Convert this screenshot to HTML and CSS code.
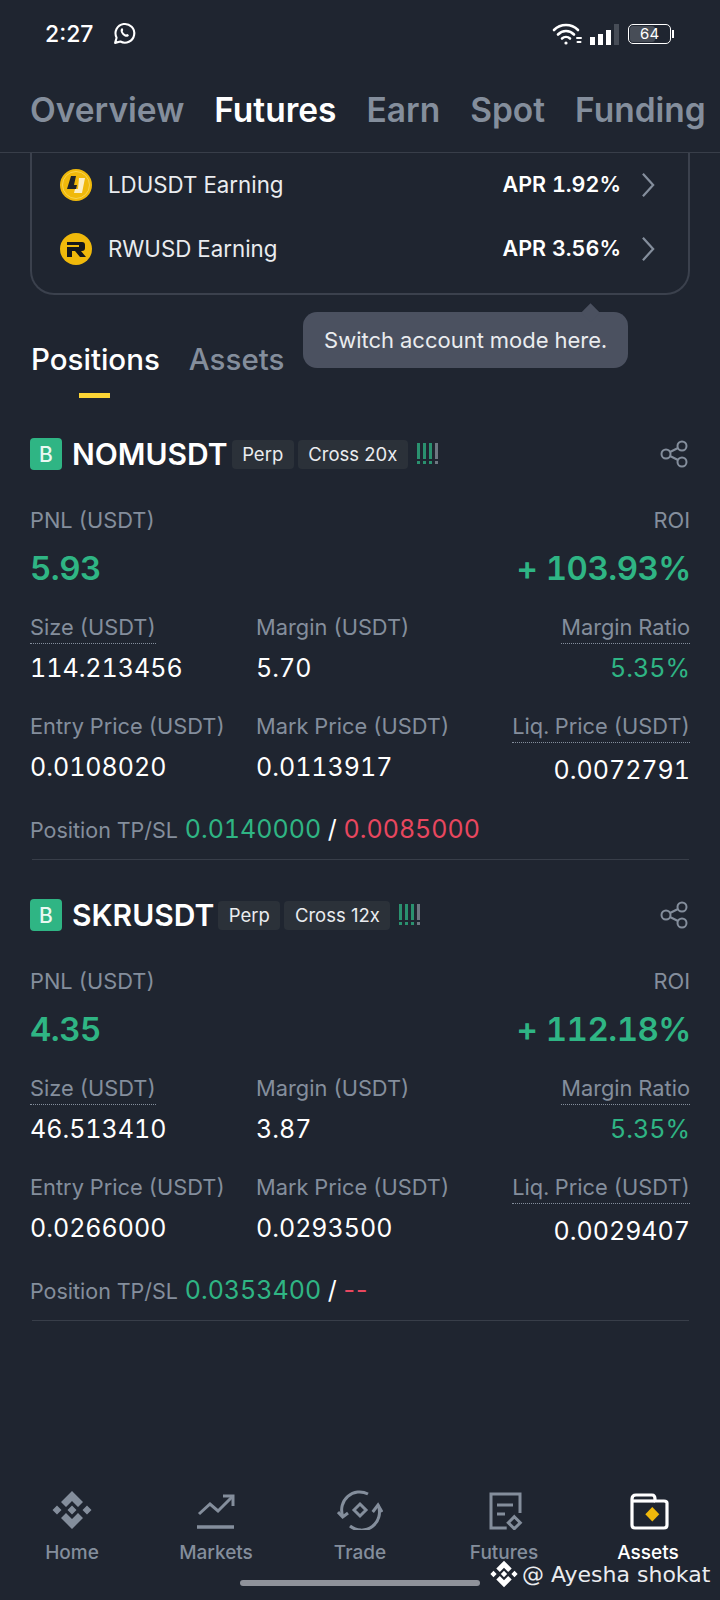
FILE: index.html
```html
<!DOCTYPE html>
<html lang="en">
<head>
<meta charset="utf-8">
<title>Futures</title>
<link rel="stylesheet" href="styles.css">
</head>
<body>
<div class="screen">
  <header class="status">
    <div class="status-left">
      <span class="time">2:27</span>
      <svg class="wa" viewBox="0 0 24 24" fill="none" stroke="#fff" stroke-width="2"><path d="M3 21l1.400-5A9 9 0 1 1 8 19.700z" stroke-linejoin="round"/><path d="M8.500 8c.8-1.500 1.800-1 2.200.3.200.8-.6 1.200-.4 1.800.6 1.300 1.500 2.200 3 2.900.6.200 1-.7 1.700-.4 1.400.5 1.600 1.400.3 2.200-1.500.8-3.800-.2-5.200-1.700C8.700 11.700 7.800 9.500 8.500 8z" fill="#fff" stroke="none"/></svg>
    </div>
    <div class="status-right">
      <svg class="wifi" viewBox="0 0 32 24" fill="none" stroke="#fff" stroke-width="2.600" stroke-linecap="round"><path d="M2 8a17 17 0 0 1 24 0"/><path d="M6 12.500a11 11 0 0 1 16 0"/><path d="M10 16.500a6 6 0 0 1 8 0"/><circle cx="14" cy="21" r="1.600" fill="#fff" stroke="none"/><path d="M25 16h4M25.500 20h3" stroke-width="2"/></svg>
      <div class="signal"><i class="b1"></i><i class="b2"></i><i class="b3"></i><i class="b4"></i></div>
      <div class="battery"><span class="batt-fill"></span><span class="batt-num">64</span></div>
      <span class="batt-tip"></span>
    </div>
  </header>

  <nav class="top-tabs">
    <span>Overview</span><span class="on">Futures</span><span>Earn</span><span>Spot</span><span>Funding</span>
  </nav>

  <main class="content">
    <section class="earn-card">
      <div class="earn-row">
        <svg class="coin" viewBox="0 0 32 32"><circle cx="16" cy="16" r="16" fill="#f0b90b"/><circle cx="16" cy="16" r="13.500" fill="none" stroke="#f8d34e" stroke-width="1"/><path d="M11 7h5l-2 9h3l-1 4H7z" fill="#1e2329"/><path d="M19 9h6l-3 15h-8l1-4h3z" fill="#fbeec5"/></svg>
        <span class="earn-name">LDUSDT Earning</span>
        <span class="earn-apr">APR 1.92%</span>
        <svg class="chev" viewBox="0 0 16 28" fill="none" stroke="#848e9c" stroke-width="2.400"><path d="M2 2l11 12L2 26"/></svg>
      </div>
      <div class="earn-row">
        <svg class="coin" viewBox="0 0 32 32"><circle cx="16" cy="16" r="16" fill="#f0b90b"/><path d="M7 9h15q3 0 3 3v3q0 3-3 3h-1l5 6h-6l-5-6h-3v6H7v-10h12v-2H7z" fill="#14171c"/></svg>
        <span class="earn-name">RWUSD Earning</span>
        <span class="earn-apr">APR 3.56%</span>
        <svg class="chev" viewBox="0 0 16 28" fill="none" stroke="#848e9c" stroke-width="2.400"><path d="M2 2l11 12L2 26"/></svg>
      </div>
    </section>

    <div class="sub-tabs">
      <div class="sub-tab on">Positions<span class="ink"></span></div>
      <div class="sub-tab">Assets</div>
    </div>
    <div class="tooltip">Switch account mode here.</div>

    <article class="pos">
      <div class="pos-head">
        <span class="side">B</span>
        <span class="symbol">NOMUSDT</span>
        <span class="chip">Perp</span>
        <span class="chip">Cross 20x</span>
        <svg class="bars" viewBox="0 0 22 22"><path class="g" d="M0 0h3v16H0zM0 18h3v3H0zM6 0h3v16H6zM6 18h3v3H6zM12 0h3v16h-3zM12 18h3v3h-3z"/><path class="n" d="M18 0h3v16h-3zM18 18h3v3h-3z"/></svg>
        <svg class="share" viewBox="0 0 28 28" fill="none" stroke="#848e9c" stroke-width="2"><circle cx="22" cy="6" r="4.500"/><circle cx="6" cy="14" r="4.500"/><circle cx="22" cy="22" r="4.500"/><path d="M10 12l8-4M10 16l8 4"/></svg>
      </div>
      <div class="pnl-row">
        <div class="pnl-col"><span class="lbl">PNL (USDT)</span><span class="big">5.93</span></div>
        <div class="pnl-col end"><span class="lbl">ROI</span><span class="big">+ 103.93%</span></div>
      </div>
      <div class="grid">
        <div class="cell"><span class="lbl dot">Size (USDT)</span><span class="val">114.213456</span></div>
        <div class="cell"><span class="lbl">Margin (USDT)</span><span class="val">5.70</span></div>
        <div class="cell end"><span class="lbl dot">Margin Ratio</span><span class="val up">5.35%</span></div>
        <div class="cell"><span class="lbl">Entry Price (USDT)</span><span class="val">0.0108020</span></div>
        <div class="cell"><span class="lbl">Mark Price (USDT)</span><span class="val">0.0113917</span></div>
        <div class="cell end"><span class="lbl dot">Liq. Price (USDT)</span><span class="val low">0.0072791</span></div>
      </div>
      <div class="tpsl"><span class="lbl">Position TP/SL</span> <span class="up">0.0140000</span> <span>/</span> <span class="down">0.0085000</span></div>
      <div class="rule"></div>
    </article>

    <article class="pos">
      <div class="pos-head">
        <span class="side">B</span>
        <span class="symbol">SKRUSDT</span>
        <span class="chip">Perp</span>
        <span class="chip">Cross 12x</span>
        <svg class="bars" viewBox="0 0 22 22"><path class="g" d="M0 0h3v16H0zM0 18h3v3H0zM6 0h3v16H6zM6 18h3v3H6zM12 0h3v16h-3zM12 18h3v3h-3z"/><path class="n" d="M18 0h3v16h-3zM18 18h3v3h-3z"/></svg>
        <svg class="share" viewBox="0 0 28 28" fill="none" stroke="#848e9c" stroke-width="2"><circle cx="22" cy="6" r="4.500"/><circle cx="6" cy="14" r="4.500"/><circle cx="22" cy="22" r="4.500"/><path d="M10 12l8-4M10 16l8 4"/></svg>
      </div>
      <div class="pnl-row">
        <div class="pnl-col"><span class="lbl">PNL (USDT)</span><span class="big">4.35</span></div>
        <div class="pnl-col end"><span class="lbl">ROI</span><span class="big">+ 112.18%</span></div>
      </div>
      <div class="grid">
        <div class="cell"><span class="lbl dot">Size (USDT)</span><span class="val">46.513410</span></div>
        <div class="cell"><span class="lbl">Margin (USDT)</span><span class="val">3.87</span></div>
        <div class="cell end"><span class="lbl dot">Margin Ratio</span><span class="val up">5.35%</span></div>
        <div class="cell"><span class="lbl">Entry Price (USDT)</span><span class="val">0.0266000</span></div>
        <div class="cell"><span class="lbl">Mark Price (USDT)</span><span class="val">0.0293500</span></div>
        <div class="cell end"><span class="lbl dot">Liq. Price (USDT)</span><span class="val low">0.0029407</span></div>
      </div>
      <div class="tpsl"><span class="lbl">Position TP/SL</span> <span class="up">0.0353400</span> <span>/</span> <span class="down dash">--</span></div>
      <div class="rule"></div>
    </article>
  </main>

  <nav class="bottom-nav">
    <div class="nav-item">
      <svg viewBox="-3 0 46 40" fill="#848e9c"><path d="M20 1l11 11-5 5-6-6-6 6-5-5z"/><path d="M5 15.500l4.500 4.500L5 24.500.5 20zM35 15.500l4.500 4.500-4.500 4.500-4.500-4.500zM20 15.500l4.500 4.500-4.500 4.500-4.500-4.500z"/><path d="M20 39L9 28l5-5 6 6 6-6 5 5z"/></svg>
      <span>Home</span>
    </div>
    <div class="nav-item">
      <svg viewBox="-3 0 46 40" fill="none" stroke="#848e9c" stroke-width="3"><path d="M3 24l11-10 8 7 14-14"/><path d="M27 6h10v10"/><path d="M1 37h37" stroke-width="3.500"/></svg>
      <span>Markets</span>
    </div>
    <div class="nav-item">
      <svg viewBox="-1 0 46 40" fill="none" stroke="#848e9c" stroke-width="3"><path d="M4.700 26A18 18 0 0 1 30 4"/><path d="M0 22l4.700 5 5.300-4"/><path d="M40 15A18 18 0 0 1 12 36"/><path d="M34.700 22l5.300-7 4 7"/><path d="M22 14l6 6-6 6-6-6z"/></svg>
      <span>Trade</span>
    </div>
    <div class="nav-item">
      <svg viewBox="-3 0 46 40" fill="none" stroke="#848e9c" stroke-width="3"><path d="M22.700 38H7V4h29v19"/><path d="M13 15h16M13 24h8"/><path d="M30.300 26.700l6 6-6 6-6-6z"/></svg>
      <span>Futures</span>
    </div>
    <div class="nav-item on">
      <svg viewBox="-3 0 46 40" fill="none" stroke="#fff" stroke-width="3.200" stroke-linejoin="round"><path d="M4 9q0-4 4-4h16q3 0 3 4v2h9q3 0 3 2v22q0 3-3 3H7q-3 0-3-3z"/><path d="M4 11h23"/><path d="M24.300 17l7 7.300-7 7.300-7-7.300z" fill="#f0b90b" stroke="none"/></svg>
      <span>Assets</span>
    </div>
  </nav>

  <div class="home-bar"></div>
  <div class="watermark">
    <svg viewBox="0 0 40 40" fill="#fff"><path d="M20 1l11 11-5 5-6-6-6 6-5-5z"/><path d="M5 15.500l4.500 4.500L5 24.500.5 20zM35 15.500l4.500 4.500-4.500 4.500-4.500-4.500zM20 15.500l4.500 4.500-4.500 4.500-4.500-4.500z"/><path d="M20 39L9 28l5-5 6 6 6-6 5 5z"/></svg>
    <span>@ Ayesha shokat</span>
  </div>
</div>
</body>
</html>
```
FILE: styles.css
```css
* { box-sizing: border-box; }
html, body { margin: 0; padding: 0; }
body { background: #1f2530; font-family: Inter, "Liberation Sans", sans-serif; color: #eaecef; font-variant-numeric: tabular-nums; }
.screen { width: 720px; height: 1600px; position: relative; overflow: hidden; display: flex; flex-direction: column; background: #1f2530; }

.status { height: 67px; flex: none; display: flex; justify-content: space-between; align-items: center; padding: 0 46px 0 45px; }
.status-left { display: flex; align-items: center; gap: 19px; }
.time { font-size: 23px; font-weight: 500; color: #fff; font-variant-numeric: normal; }
.wa { width: 25px; height: 25px; }
.status-right { display: flex; align-items: center; }
.wifi { width: 32px; height: 24px; margin-right: 6px; }
.signal { display: flex; align-items: flex-end; gap: 3px; height: 22px; margin-right: 9px; }
.signal i { width: 5px; background: #fff; display: block; }
.b1 { height: 8px; } .b2 { height: 11px; } .b3 { height: 15px; } .signal .b4 { height: 21px; background: #474d57; }
.battery { width: 43px; height: 20px; border: 1.500px solid #fff; border-radius: 5px; position: relative; display: flex; align-items: center; justify-content: center; margin-right: 2px; }
.batt-fill { position: absolute; left: 1px; top: 1px; bottom: 1px; width: 62%; background: #474d57; border-radius: 3px; }
.batt-num { position: relative; font-size: 15px; color: #fff; }
.batt-tip { width: 2px; height: 8px; background: #fff; margin-left: -1px; }

.top-tabs { height: 86px; flex: none; display: flex; align-items: center; gap: 30px; padding: 0 0 0 30px; border-bottom: 1px solid #383e49; font-size: 33.500px; font-weight: 600; color: #848e9c; white-space: nowrap; overflow: hidden; }
.top-tabs .on { color: #fff; }

.content { flex: 1; min-height: 0; position: relative; }
.earn-card { margin: 0 30px; height: 142px; padding: 0 32px 0 28px; border: 2px solid #3b414d; border-top: 0; border-radius: 0 0 24px 24px; }
.earn-row { height: 64px; display: flex; align-items: center; font-size: 22.300px; }
.coin { width: 32px; height: 32px; flex: none; margin-right: 16px; }
.earn-name { flex: 1; color: #eaecef; margin-bottom: 2px; }
.earn-apr { font-weight: 600; color: #fff; margin: 0 20px 2px 0; font-size: 21.500px; }
.chev { width: 15px; height: 26px; }

.sub-tabs { display: flex; gap: 29px; padding: 0 31px; margin-top: 44px; height: 73px; font-size: 29.500px; font-weight: 500; color: #848e9c; }
.sub-tab { position: relative; line-height: 40px; }
.sub-tab.on { color: #fff; }
.ink { position: absolute; left: 48px; top: 54px; width: 31px; height: 5px; background: #fcd535; }

.tooltip { position: absolute; left: 303px; top: 159px; width: 325px; height: 56px; background: #4b5160; border-radius: 14px; font-size: 22px; color: #eaecef; display: flex; align-items: center; justify-content: center; }
.tooltip::before { content: ""; position: absolute; left: 281px; top: -6px; width: 13px; height: 13px; background: #4b5160; transform: rotate(45deg); }

.pos { padding: 26px 30px 0 30px; height: 461px; }
.pos-head { display: flex; align-items: center; height: 32px; }
.side { width: 32px; height: 32px; background: #2fb584; border-radius: 4px; color: #eaf8f2; font-size: 21px; font-weight: 500; display: flex; align-items: center; justify-content: center; margin-right: 10px; }
.symbol { font-size: 30px; font-weight: 600; color: #fff; margin-right: 4px; white-space: nowrap; }
.chip { height: 29px; padding: 0 10.500px; background: #2b3139; border-radius: 4px; font-size: 18.500px; color: #eaecef; display: flex; align-items: center; margin-right: 4px; white-space: nowrap; font-variant-numeric: normal; }
.bars { width: 22px; height: 22px; margin-left: 5px; }
.bars .g { fill: #2fb584; opacity: .75; }
.bars .n { fill: #6f7782; }
.share { width: 28px; height: 28px; margin: 0 2px 0 auto; }

.pnl-row { display: flex; justify-content: space-between; margin-top: 36px; }
.pnl-col { display: flex; flex-direction: column; gap: 14px; }
.end { align-items: flex-end; text-align: right; }
.lbl { font-size: 21.800px; color: #848e9c; line-height: 28px; }
.big { font-size: 33px; font-weight: 600; color: #2fb584; line-height: 40px; letter-spacing: -.5px; }
.end .big { margin-right: -1px; }

.grid { display: grid; grid-template-columns: 226px 1fr auto; row-gap: 27px; margin-top: 25px; }
.cell { display: flex; flex-direction: column; }
.cell .lbl { border-bottom: 1px dotted transparent; align-self: flex-start; padding-bottom: 2px; }
.cell .dot { border-bottom-color: #848e9c; }
.end.cell .lbl { align-self: flex-end; }
.val { font-size: 25px; color: #fff; line-height: 34px; margin-top: 7px; }
.val.up { color: #2fb584; }
.val.low { margin-top: 10px; }
.up { color: #2fb584; }
.down { color: #e8475f; }
.dash { font-variant-numeric: normal; letter-spacing: 1px; }
.tpsl { margin-top: 25px; font-size: 25px; color: #fff; line-height: 34px; }
.tpsl .lbl { font-size: 21.500px; }
.rule { height: 1px; margin: 13px 1px 0 2px; background: #383e49; }

.bottom-nav { flex: none; height: 110px; display: grid; grid-template-columns: repeat(5, 1fr); font-size: 19px; font-weight: 500; color: #848e9c; text-align: center; }
.nav-item { display: flex; flex-direction: column; align-items: center; gap: 11px; line-height: 23px; }
.nav-item svg { width: 46px; height: 40px; }
.nav-item.on { color: #fff; }

.home-bar { position: absolute; left: 240px; top: 1580px; width: 240px; height: 6px; background: #8f929a; border-radius: 3px; }
.watermark { position: absolute; left: 490px; top: 1558px; display: flex; align-items: center; gap: 4px; font-family: "DejaVu Sans", sans-serif; font-size: 22px; color: #eaecef; }
.watermark svg { width: 28px; height: 32px; }
```
